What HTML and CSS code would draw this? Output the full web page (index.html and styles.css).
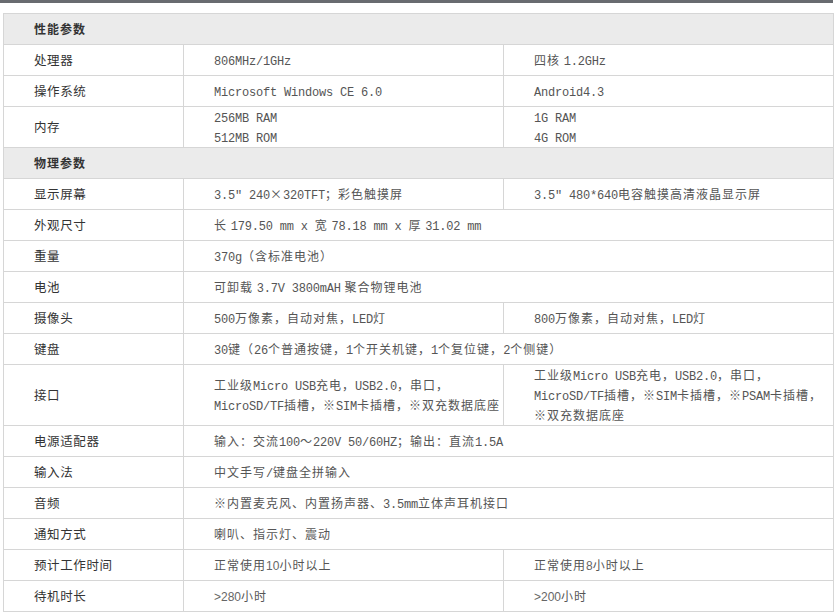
FILE: index.html
```html
<!DOCTYPE html>
<html lang="zh-CN">
<head>
<meta charset="utf-8">
<title>参数</title>
<link rel="stylesheet" href="styles.css">
</head>
<body>
<div class="topbar"></div>
<table class="spec">
  <colgroup><col class="c1"><col class="c2"><col class="c3"></colgroup>
  <tr class="sec"><td colspan="3">性能参数</td></tr>
  <tr><td class="k">处理器</td><td><span class="m">806MHz/1GHz</span></td><td>四核 <span class="m">1.2GHz</span></td></tr>
  <tr><td class="k">操作系统</td><td><span class="m">Microsoft Windows CE 6.0</span></td><td><span class="m">Android4.3</span></td></tr>
  <tr><td class="k">内存</td><td><span class="m">256MB RAM</span><br><span class="m">512MB ROM</span></td><td><span class="m">1G RAM</span><br><span class="m">4G ROM</span></td></tr>
  <tr class="sec"><td colspan="3">物理参数</td></tr>
  <tr><td class="k">显示屏幕</td><td><span class="m">3.5″ 240</span>×<span class="m">320TFT</span>；彩色触摸屏</td><td><span class="m">3.5″ 480*640</span>电容触摸高清液晶显示屏</td></tr>
  <tr><td class="k">外观尺寸</td><td colspan="2">长 <span class="m">179.50 mm x </span>宽 <span class="m">78.18 mm x </span>厚 <span class="m">31.02 mm</span></td></tr>
  <tr><td class="k">重量</td><td colspan="2"><span class="m">370g</span>（含标准电池）</td></tr>
  <tr><td class="k">电池</td><td colspan="2">可卸载 <span class="m">3.7V 3800mAH</span> 聚合物锂电池</td></tr>
  <tr><td class="k">摄像头</td><td><span class="m">500</span>万像素，自动对焦，<span class="m">LED</span>灯</td><td><span class="m">800</span>万像素，自动对焦，<span class="m">LED</span>灯</td></tr>
  <tr><td class="k">键盘</td><td colspan="2"><span class="m">30</span>键（<span class="m">26</span>个普通按键，<span class="m">1</span>个开关机键，<span class="m">1</span>个复位键，<span class="m">2</span>个侧键）</td></tr>
  <tr><td class="k">接口</td><td>工业级<span class="m">Micro USB</span>充电，<span class="m">USB2.0</span>，串口，<br><span class="m">MicroSD/TF</span>插槽，※<span class="m">SIM</span>卡插槽，※双充数据底座</td><td>工业级<span class="m">Micro USB</span>充电，<span class="m">USB2.0</span>，串口，<br><span class="m">MicroSD/TF</span>插槽，※<span class="m">SIM</span>卡插槽，※<span class="m">PSAM</span>卡插槽，<br>※双充数据底座</td></tr>
  <tr><td class="k">电源适配器</td><td colspan="2">输入：交流<span class="m">100</span>～<span class="m">220V 50/60HZ</span>；输出：直流<span class="m">1.5A</span></td></tr>
  <tr><td class="k">输入法</td><td colspan="2">中文手写<span class="m">/</span>键盘全拼输入</td></tr>
  <tr><td class="k">音频</td><td colspan="2">※内置麦克风、内置扬声器、<span class="m">3.5mm</span>立体声耳机接口</td></tr>
  <tr><td class="k">通知方式</td><td colspan="2">喇叭、指示灯、震动</td></tr>
  <tr><td class="k">预计工作时间</td><td>正常使用<span class="s">10</span>小时以上</td><td>正常使用<span class="s">8</span>小时以上</td></tr>
  <tr><td class="k">待机时长</td><td><span class="s">&gt;280</span>小时</td><td><span class="s">&gt;200</span>小时</td></tr>
</table>
</body>
</html>
```
FILE: styles.css
```css
html, body {
  margin: 0;
  padding: 0;
  background: #ffffff;
}
body {
  font-family: "Noto Sans CJK SC", "Liberation Sans", sans-serif;
  font-size: 12px;
  color: #444;
}
.topbar {
  width: 833px;
  height: 3px;
  background: #686b70;
  margin-bottom: 10px;
}
.spec {
  margin-left: 3px;
  width: 830px;
  border-collapse: collapse;
  table-layout: fixed;
}
.c1 { width: 180px; }
.c2 { width: 320px; }
.c3 { width: 330px; }
.spec td {
  border: 1px solid #d6d6d6;
  height: 30px;
  padding: 0 0 0 30px;
  line-height: 20px;
  vertical-align: middle;
  letter-spacing: 1px;
  color: #555;
  white-space: nowrap;
}
.spec td.k {
  color: #333;
  font-size: 12.5px;
  letter-spacing: 0.6px;
}
.spec tr.sec td {
  background: #ebebeb;
  color: #333;
  font-weight: bold;
}
.m {
  font-family: "Liberation Mono", monospace;
  font-size: 12px;
  line-height: 1;
  letter-spacing: -0.2px;
  color: #555;
}
.s {
  font-family: "Liberation Sans", sans-serif;
  line-height: 1;
  letter-spacing: 0;
  color: #666;
}
```
